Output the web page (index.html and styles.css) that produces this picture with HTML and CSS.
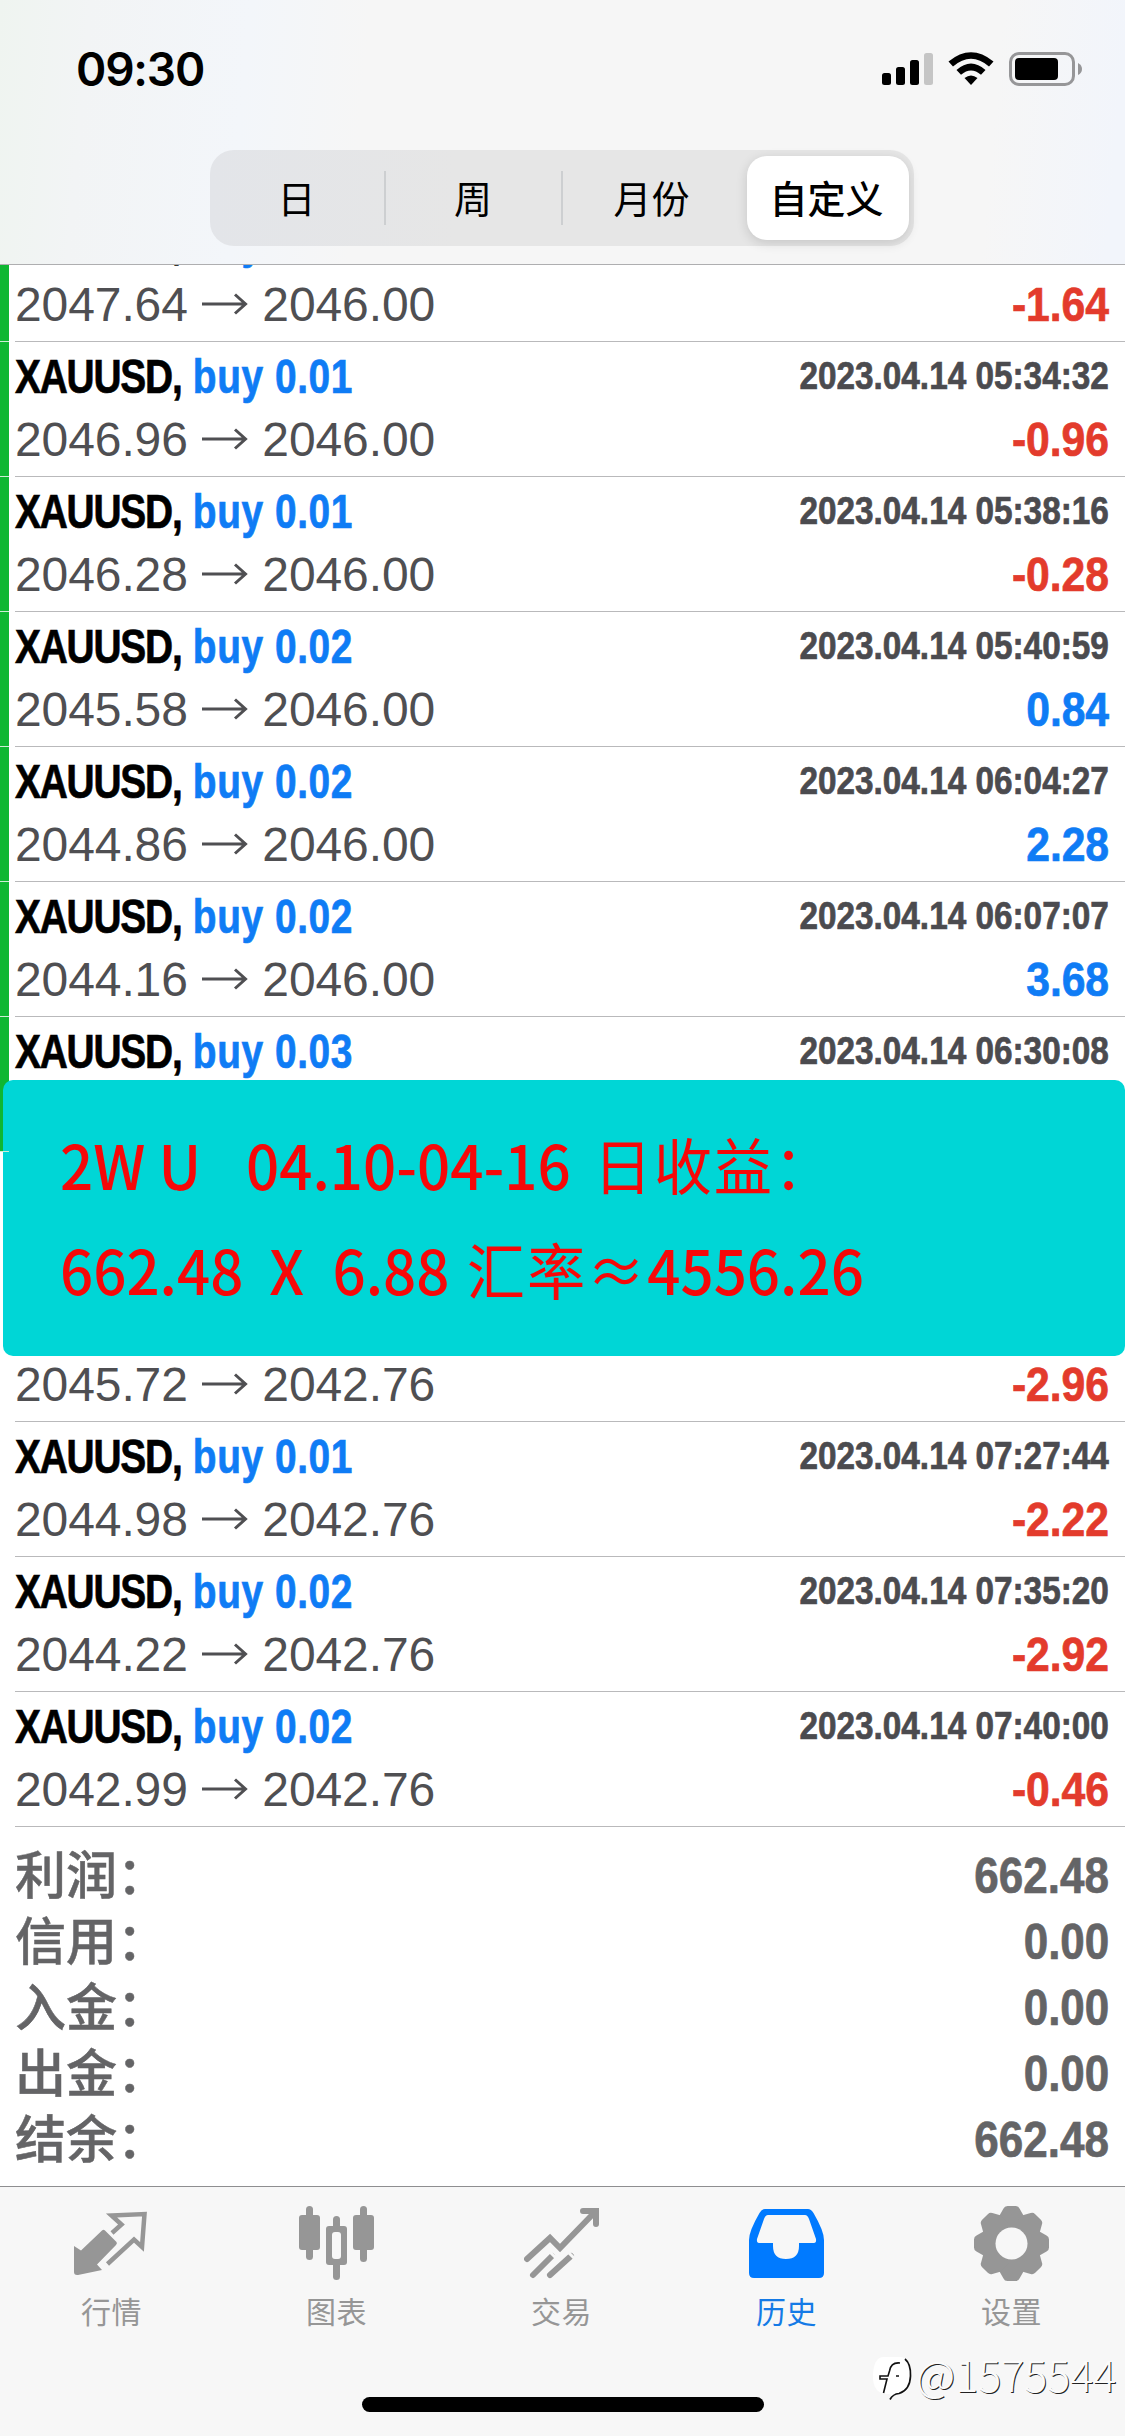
FILE: index.html
```html
<!DOCTYPE html>
<html lang="zh-CN">
<head>
<meta charset="utf-8">
<title>历史</title>
<link rel="stylesheet" href="styles.css">
</head>
<body>
<svg class="defs" width="0" height="0"><defs>
<symbol id="arrow" viewBox="0 0 48 36"><path d="M1 18H44M34 8.500L44.500 18L34 27.500" fill="none" stroke="#4f4f52" stroke-width="3"/></symbol>
</defs></svg>
<div class="screen">
  <header class="top">
    <div class="status">
      <span class="clock">09:30</span>
      <div class="status-icons">
        <svg width="203" height="34" viewBox="0 0 203 34">
          <rect x="0" y="21" width="9" height="12" rx="2.500"/><rect x="14" y="15" width="9" height="18" rx="2.500"/><rect x="28" y="8" width="9" height="25" rx="2.500"/><rect x="42" y="1" width="9" height="32" rx="2.500" fill="#c5c5c5"/>
          <path d="M66.500 9.500Q89-9 111.500 9.500L107 14.500Q89-1 71 14.500Z"/><path d="M74.500 18Q89 5 103.500 18L99 22.800Q89 14 79 22.800Z"/><path d="M82.500 26Q89 21 95.500 26L89 33Z"/>
          <rect x="128.500" y="1.500" width="63" height="31" rx="8.500" fill="none" stroke="#969698" stroke-width="3"/><rect x="133" y="6" width="43" height="22" rx="4"/><path d="M196 11q4 2 4 6t-4 6z" fill="#969698"/>
        </svg>
      </div>
    </div>
    <nav class="segments">
      <span class="seg">日</span><span class="seg">周</span><span class="seg last">月份</span><span class="seg active">自定义</span>
    </nav>
  </header>

  <main class="history">
    <ul class="deals">
      <li class="deal open first"><div class="line"><span class="name"><b>XAUUSD,</b> buy 0.01</span></div><div class="line prices"><span>2047.64 <svg class="arr"><use href="#arrow"/></svg> 2046.00</span><span class="pl loss">-1.64</span></div></li>
      <li class="deal open"><div class="line"><span class="name"><b>XAUUSD,</b> buy 0.01</span><time>2023.04.14 05:34:32</time></div><div class="line prices"><span>2046.96 <svg class="arr"><use href="#arrow"/></svg> 2046.00</span><span class="pl loss">-0.96</span></div></li>
      <li class="deal open"><div class="line"><span class="name"><b>XAUUSD,</b> buy 0.01</span><time>2023.04.14 05:38:16</time></div><div class="line prices"><span>2046.28 <svg class="arr"><use href="#arrow"/></svg> 2046.00</span><span class="pl loss">-0.28</span></div></li>
      <li class="deal open"><div class="line"><span class="name"><b>XAUUSD,</b> buy 0.02</span><time>2023.04.14 05:40:59</time></div><div class="line prices"><span>2045.58 <svg class="arr"><use href="#arrow"/></svg> 2046.00</span><span class="pl">0.84</span></div></li>
      <li class="deal open"><div class="line"><span class="name"><b>XAUUSD,</b> buy 0.02</span><time>2023.04.14 06:04:27</time></div><div class="line prices"><span>2044.86 <svg class="arr"><use href="#arrow"/></svg> 2046.00</span><span class="pl">2.28</span></div></li>
      <li class="deal open"><div class="line"><span class="name"><b>XAUUSD,</b> buy 0.02</span><time>2023.04.14 06:07:07</time></div><div class="line prices"><span>2044.16 <svg class="arr"><use href="#arrow"/></svg> 2046.00</span><span class="pl">3.68</span></div></li>
      <li class="deal open"><div class="line"><span class="name"><b>XAUUSD,</b> buy 0.03</span><time>2023.04.14 06:30:08</time></div></li>
      <li class="deal"></li>
      <li class="deal"><div class="line"></div><div class="line prices"><span>2045.72 <svg class="arr"><use href="#arrow"/></svg> 2042.76</span><span class="pl loss">-2.96</span></div></li>
      <li class="deal"><div class="line"><span class="name"><b>XAUUSD,</b> buy 0.01</span><time>2023.04.14 07:27:44</time></div><div class="line prices"><span>2044.98 <svg class="arr"><use href="#arrow"/></svg> 2042.76</span><span class="pl loss">-2.22</span></div></li>
      <li class="deal"><div class="line"><span class="name"><b>XAUUSD,</b> buy 0.02</span><time>2023.04.14 07:35:20</time></div><div class="line prices"><span>2044.22 <svg class="arr"><use href="#arrow"/></svg> 2042.76</span><span class="pl loss">-2.92</span></div></li>
      <li class="deal"><div class="line"><span class="name"><b>XAUUSD,</b> buy 0.02</span><time>2023.04.14 07:40:00</time></div><div class="line prices"><span>2042.99 <svg class="arr"><use href="#arrow"/></svg> 2042.76</span><span class="pl loss">-0.46</span></div></li>
    </ul>
    <dl class="totals">
      <div><dt>利润：</dt><dd>662.48</dd></div>
      <div><dt>信用：</dt><dd>0.00</dd></div>
      <div><dt>入金：</dt><dd>0.00</dd></div>
      <div><dt>出金：</dt><dd>0.00</dd></div>
      <div><dt>结余：</dt><dd>662.48</dd></div>
    </dl>
    <aside class="note">
      <p><span>2W U</span><span class="n-date">04.10-04-16</span><span class="han n-gain">日收益：</span></p>
      <p><span>662.48</span><span class="n-x">X</span><span class="n-rate">6.88</span><span class="han n-fx">汇率</span><span class="han n-eq">≈</span><span class="n-sum">4556.26</span></p>
    </aside>
  </main>

  <footer class="tabs">
    <a class="tab"><svg width="75" height="75" viewBox="0 0 75 75">
      <path d="M0 40L7 44.500L28 24.500Q29.500 23 31 24.500L42.500 36Q43.500 37.500 42 39L23 58.500L28 64L4 69Q0 69.500 0 66Z" fill="#969696"/>
      <path d="M38 27L47.500 18.500L37.500 9.500L70.500 8L68 41L60 33.500L33.500 58" fill="none" stroke="#969696" stroke-width="4.500"/></svg><span>行情</span></a>
    <a class="tab"><svg width="75" height="75" viewBox="0 0 75 75" fill="#969696">
      <rect x="0" y="9" width="21" height="35" rx="3"/><rect x="7" y="0" width="7" height="54" rx="3.500"/><rect x="54" y="9" width="21" height="35" rx="3"/><rect x="61" y="0" width="7" height="56" rx="3.500"/><rect x="34" y="10" width="7" height="64" rx="3.500"/><rect x="27" y="20" width="21" height="39" rx="3"/><rect x="33" y="26" width="9" height="27" rx="3" fill="#f7f7f7"/></svg><span>图表</span></a>
    <a class="tab"><svg width="75" height="75" viewBox="0 0 75 75" fill="none" stroke="#969696" stroke-width="6" stroke-linecap="round" stroke-linejoin="miter">
      <path d="M3 53L26 32L36 42L70 7M59 5H72V18"/><path d="M9 69L28 50M26 69L47 50"/><path d="M26 46L32 52M44 46L50 52" stroke="#f7f7f7" stroke-width="3" stroke-linecap="butt"/></svg><span>交易</span></a>
    <a class="tab active"><svg width="75" height="75" viewBox="0 0 75 75">
      <path fill-rule="evenodd" fill="#007aff" d="M16 3H59Q62 3 64.500 7Q75 25 75 34V67Q75 72 70 72H5Q0 72 0 67V34Q0 25 10.500 7Q13 3 16 3ZM19 9Q16.500 9 15 13L8 33Q7.500 37 10 37H24V40Q24 53 37 53Q50 53 50 40V37H65Q67.500 37 67 33L60 13Q58.500 9 56 9Z"/></svg><span>历史</span></a>
    <a class="tab"><svg width="75" height="75" viewBox="-37.500 -37.500 75 75">
      <g fill="#969696"><circle r="30"/><g id="teeth"><path id="tooth" d="M-12-28L-8-35Q-7-37.500-4-37.500H4Q7-37.500 8-35L12-28V0H-12Z"/><use href="#tooth" transform="rotate(45)"/><use href="#tooth" transform="rotate(90)"/><use href="#tooth" transform="rotate(135)"/></g><use href="#teeth" transform="rotate(180)"/></g><circle r="16" fill="#f7f7f7"/></svg><span>设置</span></a>
    <div class="home-bar"></div>
    <div class="watermark"><svg width="44" height="46" viewBox="0 0 44 46">
      <path d="M12 1H28Q38 1 38 20T27 38Q22 39 19 43Q20 38 16 38Q1 38 1 21Q1 1 12 1Z" fill="#fff"/>
      <path d="M33 3Q39 8 38.500 20Q38 34 27 37.500Q21 38 18 43.500" fill="none" stroke="#111" stroke-width="1.700"/>
      <path d="M28 7Q19 6 17.500 15L16 20H8V23H15L11.500 37M24 20H27" fill="none" stroke="#111" stroke-width="1.600"/></svg><span>@1575544</span></div>
  </footer>
</div>
</body>
</html>
```

FILE: styles.css
```css
* { box-sizing: border-box; margin: 0; padding: 0; }
body { width: 1125px; height: 2436px; overflow: hidden; background: #fff; font-family: "Liberation Sans", "Noto Sans CJK SC", sans-serif; }
.defs { position: absolute; }
.screen { width: 1125px; height: 2436px; display: flex; flex-direction: column; overflow: hidden; }

.top { height: 265px; flex: none; border-bottom: 1px solid #aeaeb0; background: linear-gradient(95deg, #eff4f0 0, #f2f4f5 90px, #f3f6fa 250px, #f6f6f6 370px, #f6f6f6 1000px, #f2f5fb 1125px); }
.status { height: 150px; padding: 52px 40px 0 76px; display: flex; justify-content: space-between; align-items: flex-start; }
.clock { font: 600 46px/34px Inter, sans-serif; letter-spacing: -1.2px; }
.status-icons svg { display: block; }
.segments { width: 704px; height: 96px; margin-left: 210px; padding: 6px 5px 6px 0; border-radius: 24px; background: linear-gradient(90deg, #e3e5e9, #e6e6e6 35%); display: grid; grid-template-columns: 176px 177px 184px 162px; }
.seg { position: relative; padding-right: 3px; font: 400 38px/81px "Noto Sans CJK SC", sans-serif; text-align: center; }
.seg:nth-child(-n+2)::after { content: ""; position: absolute; right: 0; top: 15px; width: 2px; height: 54px; background: #cdcfd1; }
.seg.last { padding-right: 7px; }
.seg.active { background: #fff; border-radius: 20px; font-weight: 500; box-shadow: 0 3px 12px rgba(0, 0, 0, .14); }

.history { position: relative; height: 1921px; flex: none; overflow: hidden; }
.deals { list-style: none; margin-top: -59px; }
.deal { position: relative; height: 135px; padding: 4px 16px 0 15px; }
.deal::after { content: ""; position: absolute; left: 15px; right: 0; bottom: -1px; height: 1px; background: #b9b9bb; }
.deal.open { box-shadow: inset 9px 0 #0fb732; }
.deal.open::before { content: ""; position: absolute; left: 0; width: 9px; bottom: -1px; height: 1px; background: #cdeed4; z-index: 1; }
.line { height: 63px; display: flex; justify-content: space-between; font-size: 48px; line-height: 63px; white-space: nowrap; }
.name, time, .pl, .totals dd { -webkit-text-stroke: .7px currentColor; }
.name { color: #0f7cf5; font-weight: 700; letter-spacing: .7px; transform: scaleX(.81); transform-origin: 0 0; }
.name b { color: #000; letter-spacing: -1.5px; }
time { color: #4b4b4f; font-size: 38px; font-weight: 700; transform: scaleX(.877); transform-origin: 100% 0; }
.prices { color: #4f4f52; letter-spacing: -.1px; }
.arr { width: 48px; height: 36px; vertical-align: -1px; }
.pl { color: #0f7cf5; font-weight: 700; transform: scaleX(.89); transform-origin: 100% 0; }
.pl.loss { color: #e33b2c; }

.totals { padding: 16px 16px 0 15px; }
.totals div { height: 66px; display: flex; justify-content: space-between; color: #646466; }
.totals dt { font: 500 51px/60px "Noto Sans CJK SC", sans-serif; -webkit-text-stroke: .5px currentColor; }
.totals dd { font-size: 50px; line-height: 68px; font-weight: 700; transform: scaleX(.88); transform-origin: 100% 0; }

.note { position: absolute; left: 3px; top: 815px; width: 1122px; height: 276px; padding: 31px 57px; border-radius: 10px; background: #00d6d6; color: #f60808; }
.note p { height: 105px; display: flex; font: 500 61px/105px "Noto Sans CJK SC", sans-serif; white-space: pre; transform: scaleX(.955); transform-origin: 0 0; }
.note .han { font-weight: 400; letter-spacing: 2px; }
.n-date { margin-left: 47px; }
.n-gain { margin-left: 24px; }
.n-x { margin-left: 27px; }
.n-rate { margin-left: 30px; }
.n-fx { margin-left: 18px; }

.tabs { position: relative; height: 250px; flex: none; display: grid; grid-template-columns: repeat(5, 225px); border-top: 1px solid #8e8e90; background: #f7f7f7; }
.tab { display: flex; flex-direction: column; align-items: center; padding: 19px 2px 0 0; color: #969696; font: 400 30px/44px "Noto Sans CJK SC", sans-serif; }
.tab svg { display: block; margin-bottom: 7px; }
.tab span { letter-spacing: .5px; }
.tab.active { color: #147ae6; }
.home-bar { position: absolute; left: 362px; top: 210px; width: 402px; height: 15px; border-radius: 8px; background: #000; }
.watermark { position: absolute; left: 872px; top: 169px; display: flex; }
.watermark span { font: 300 43px/34px "Noto Sans CJK SC", sans-serif; color: #fbfbfb; text-shadow: 1px 1px 0 #222; }
```
